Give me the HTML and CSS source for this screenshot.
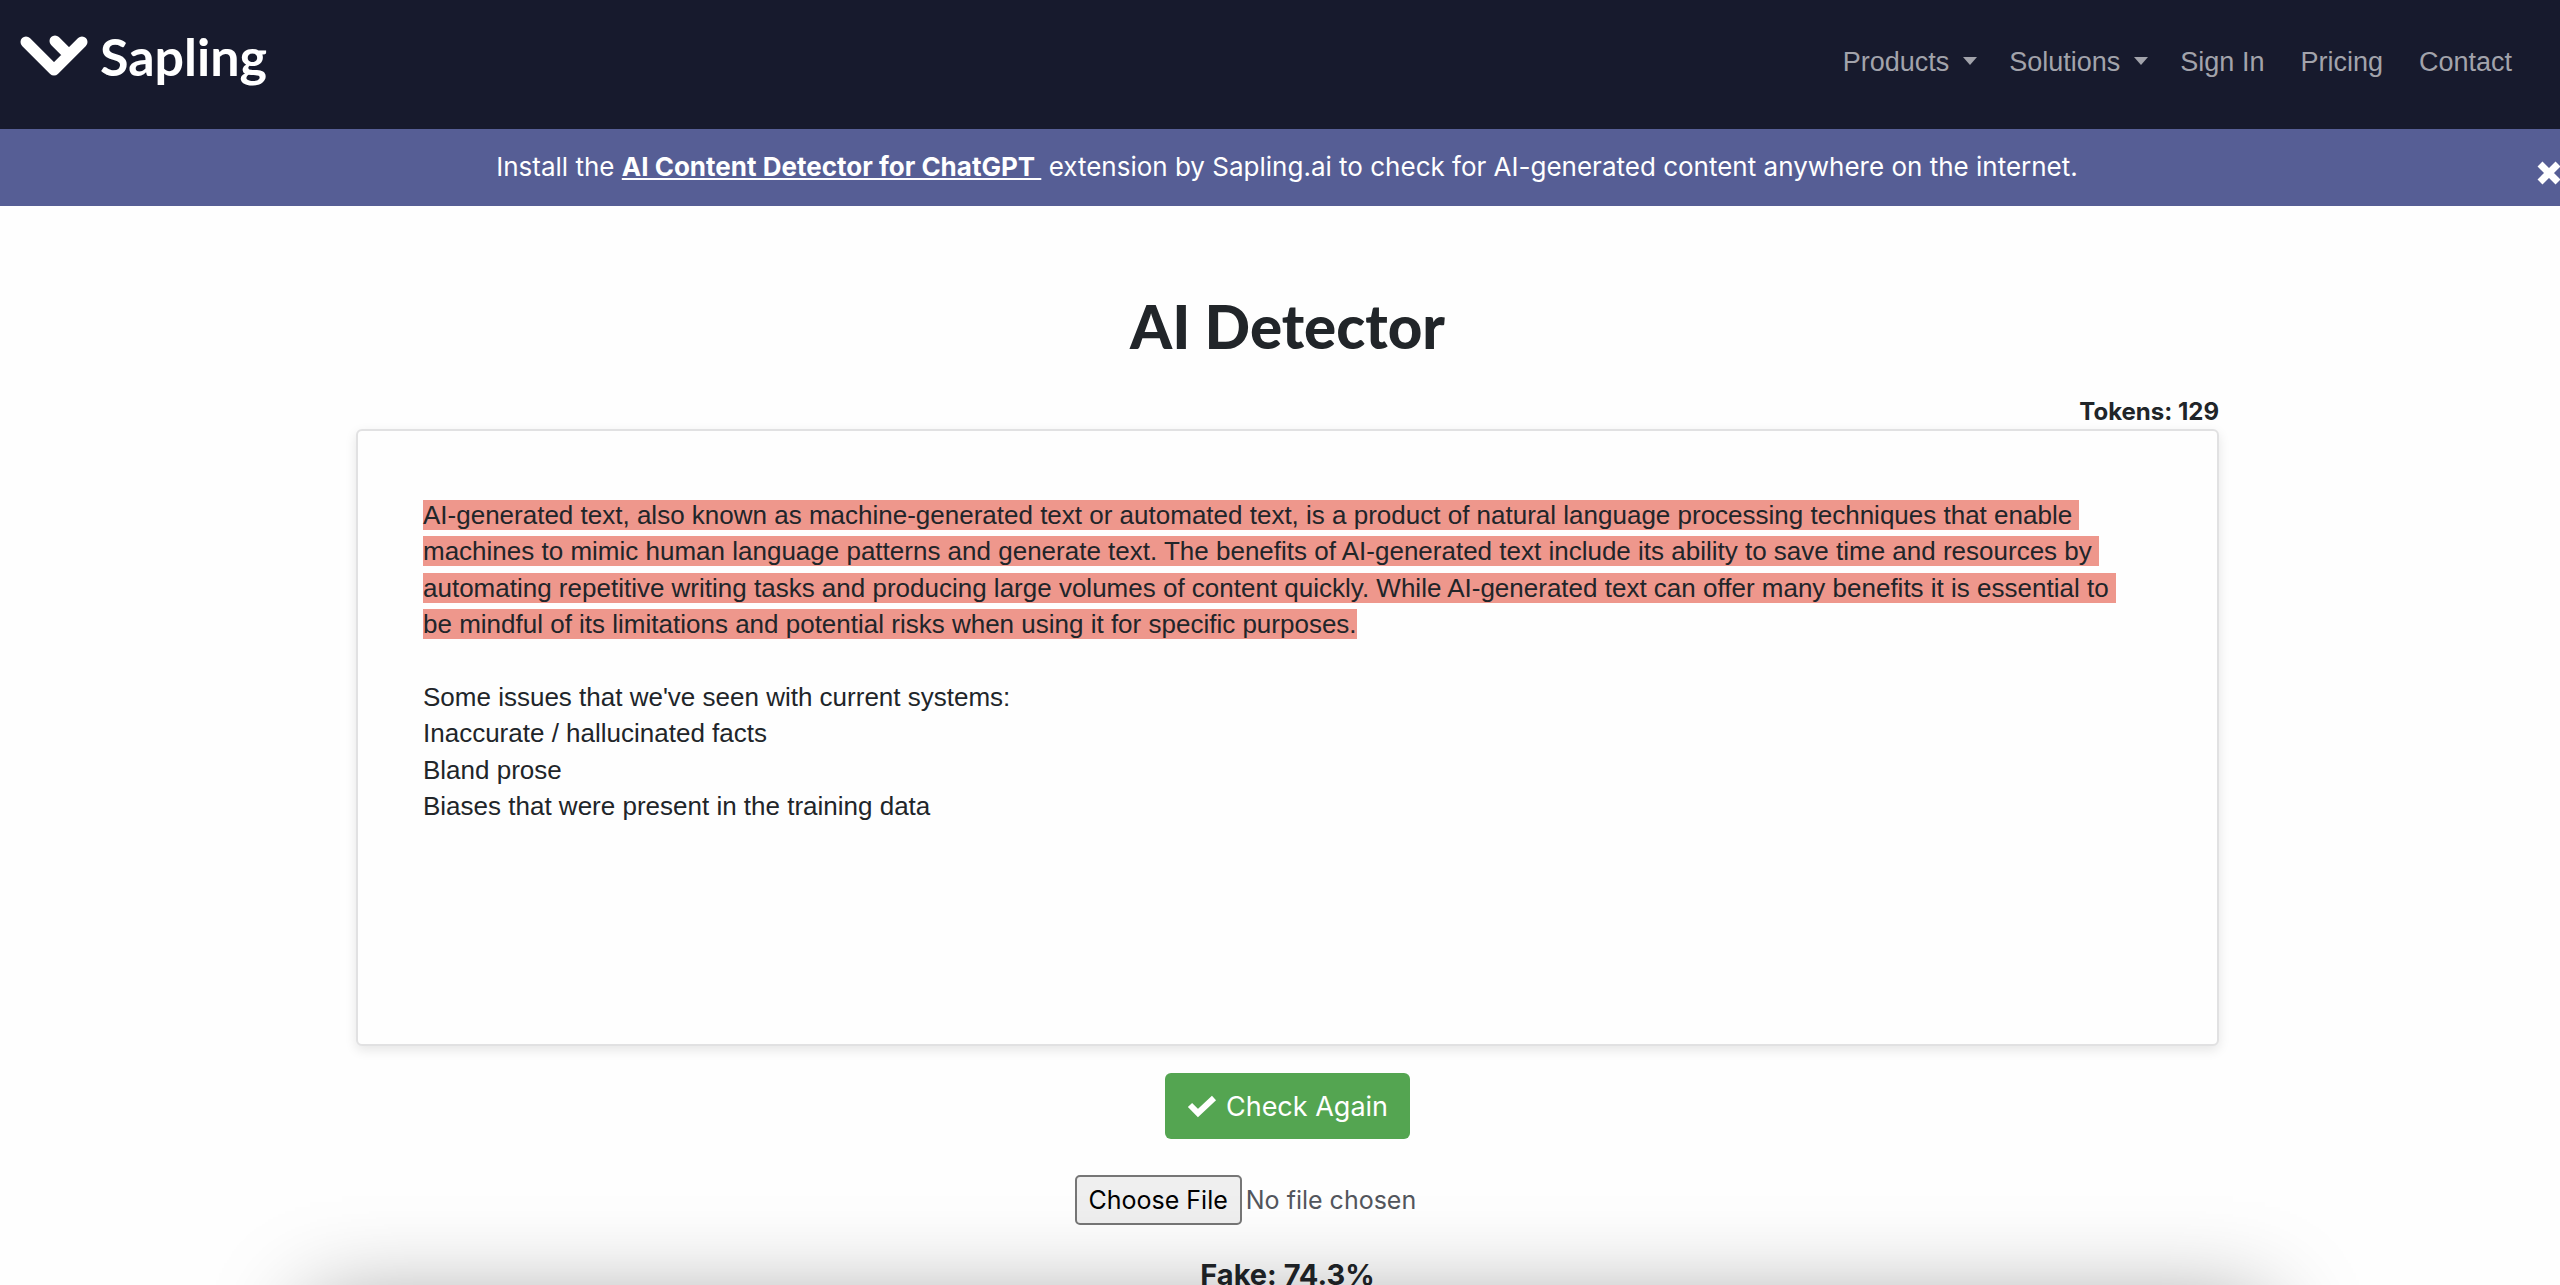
FILE: index.html
```html
<!DOCTYPE html>
<html lang="en">
<head>
    <meta charset="UTF-8">
    <meta name="viewport" content="width=device-width, initial-scale=1.0">
    <title>AI Detector | Sapling</title>
    <link rel="stylesheet" href="styles.css">
</head>
<body>
    <header class="navbar">
        <a class="brand" href="#">
            <svg class="brand-mark" viewBox="0 0 68 42" aria-hidden="true">
                <path d="M6 7 L34 35 L62 7 M35 6 L48 19" fill="none" stroke="#fff" stroke-width="11" stroke-linecap="round" stroke-linejoin="round"/>
            </svg>
            <span>Sapling</span>
        </a>
        <nav class="nav-links">
            <a class="dropdown" href="#">Products</a>
            <a class="dropdown" href="#">Solutions</a>
            <a href="#">Sign In</a>
            <a href="#">Pricing</a>
            <a href="#">Contact</a>
        </nav>
    </header>

    <div class="banner">
        <p>Install the <a href="#">AI Content Detector for ChatGPT&nbsp;</a> extension by Sapling.ai to check for AI-generated content anywhere on the internet.</p>
        <button class="banner-close" aria-label="Close">
            <svg viewBox="0 0 26 26" aria-hidden="true">
                <path d="M4 4 L22 22 M22 4 L4 22" stroke="#fff" stroke-width="7"/>
            </svg>
        </button>
    </div>

    <main class="container">
        <h1>AI Detector</h1>
        <div class="tokens">Tokens: 129</div>
        <div class="editor" contenteditable="true" role="textbox" aria-label="Text to check" spellcheck="false"><mark>AI-generated text, also known as machine-generated text or automated text, is a product of natural language processing techniques that enable <br>machines to mimic human language patterns and generate text. The benefits of AI-generated text include its ability to save time and resources by <br>automating repetitive writing tasks and producing large volumes of content quickly. While AI-generated text can offer many benefits it is essential to <br>be mindful of its limitations and potential risks when using it for specific purposes.</mark><br><br>Some issues that we've seen with current systems:<br>Inaccurate / hallucinated facts<br>Bland prose<br>Biases that were present in the training data</div>

        <button class="check-button">
            <svg viewBox="0 0 30 24" aria-hidden="true">
                <path d="M3 11 L11 19 L27 4" fill="none" stroke="#fff" stroke-width="6"/>
            </svg>
            Check Again
        </button>
        <input class="file-input" type="file" aria-label="Upload a file">
        <h2>Fake: 74.3%</h2>
    </main>

    <div class="sheet"></div>
</body>
</html>
```

FILE: styles.css
```css
* {
    box-sizing: border-box;
}
body {
    height: 100vh;
    margin: 0;
    overflow: hidden;
    background-color: #fefefe;
    color: #212529;
    font-family: Inter, sans-serif;
    font-size: 26px;
    line-height: 1.4;
}
.navbar {
    display: flex;
    justify-content: space-between;
    align-items: flex-start;
    height: 129px;
    padding: 26px 48px 0 20px;
    background-color: #171a2d;
}
.brand {
    display: flex;
    align-items: center;
    gap: 12px;
    color: #fff;
    font-family: Lato, sans-serif;
    font-size: 52px;
    font-weight: 700;
    line-height: 60px;
    text-decoration: none;
}
.brand-mark {
    width: 68px;
    height: 42px;
}
.nav-links {
    display: flex;
    gap: 36px;
    padding-top: 18px;
    font-family: "Liberation Sans", Arial, sans-serif;
    font-size: 27px;
}
.nav-links a {
    color: #a2a3ab;
    text-decoration: none;
}
.nav-links .dropdown {
    margin-right: -4px;
}
.dropdown::after {
    content: "";
    display: inline-block;
    margin-left: 14px;
    border-top: 8px solid;
    border-right: 7px solid transparent;
    border-left: 7px solid transparent;
    vertical-align: 6px;
}
.banner {
    display: flex;
    align-items: center;
    height: 77px;
    padding-left: 38px;
    background-color: #565e95;
    color: #fff;
}
.banner p {
    flex: 1;
    margin: 0;
    text-align: center;
}
.banner a {
    color: #fff;
    font-weight: 700;
}
.banner-close {
    width: 24px;
    margin-top: 10px;
    padding: 0;
    border: 0;
    background: none;
    overflow: hidden;
    cursor: pointer;
}
.banner-close svg {
    display: block;
    width: 26px;
    height: 26px;
}
.container {
    display: flex;
    flex-direction: column;
    align-items: center;
    width: 73%;
    margin-left: 356px;
    max-width: 1863px;
}
h1 {
    margin: 80px 0 29px;
    font-family: Lato, sans-serif;
    font-size: 60px;
    font-weight: 900;
    line-height: 80px;
}
.tokens {
    align-self: flex-end;
    font-size: 24px;
    font-weight: 700;
    line-height: 34px;
}
.editor {
    width: 100%;
    min-height: 617px;
    padding: 66px 65px;
    border: 2px solid #e1e1e2;
    border-radius: 6px;
    box-shadow: 0 4px 12px rgba(0,0,0,0.1);
    background-color: #fefefe;
    font-family: "Liberation Sans", Arial, sans-serif;
    font-size: 26px;
    white-space: pre-wrap;
}
mark {
    background-color: #ee978c;
    color: inherit;
}
.check-button {
    display: flex;
    align-items: center;
    gap: 9px;
    height: 66px;
    margin: 27px 0 36px;
    padding: 0 22px;
    border: 0;
    border-radius: 6px;
    background-color: #54a551;
    color: #fff;
    font-family: inherit;
    font-size: 27px;
    cursor: pointer;
}
.check-button svg {
    width: 30px;
    height: 24px;
}
.file-input {
    width: 426px;
    color: #53565d;
    font-family: inherit;
    font-size: 25px;
}
.file-input::file-selector-button {
    height: 50px;
    margin-right: 4px;
    padding: 0 12px;
    border: 2px solid #767676;
    border-radius: 5px;
    background-color: #efefef;
    color: #000;
    font-family: inherit;
    font-size: 25px;
}
h2 {
    margin: 30px 0 0;
    font-size: 29px;
    line-height: 40px;
}
/* bottom sheet, parked just below the window with only its shadow showing */
.sheet {
    position: fixed;
    top: 100%;
    right: 295px;
    left: 310px;
    height: 400px;
    box-shadow: 0 20px 90px rgba(0,0,0,0.4);
    pointer-events: none;
}
```
